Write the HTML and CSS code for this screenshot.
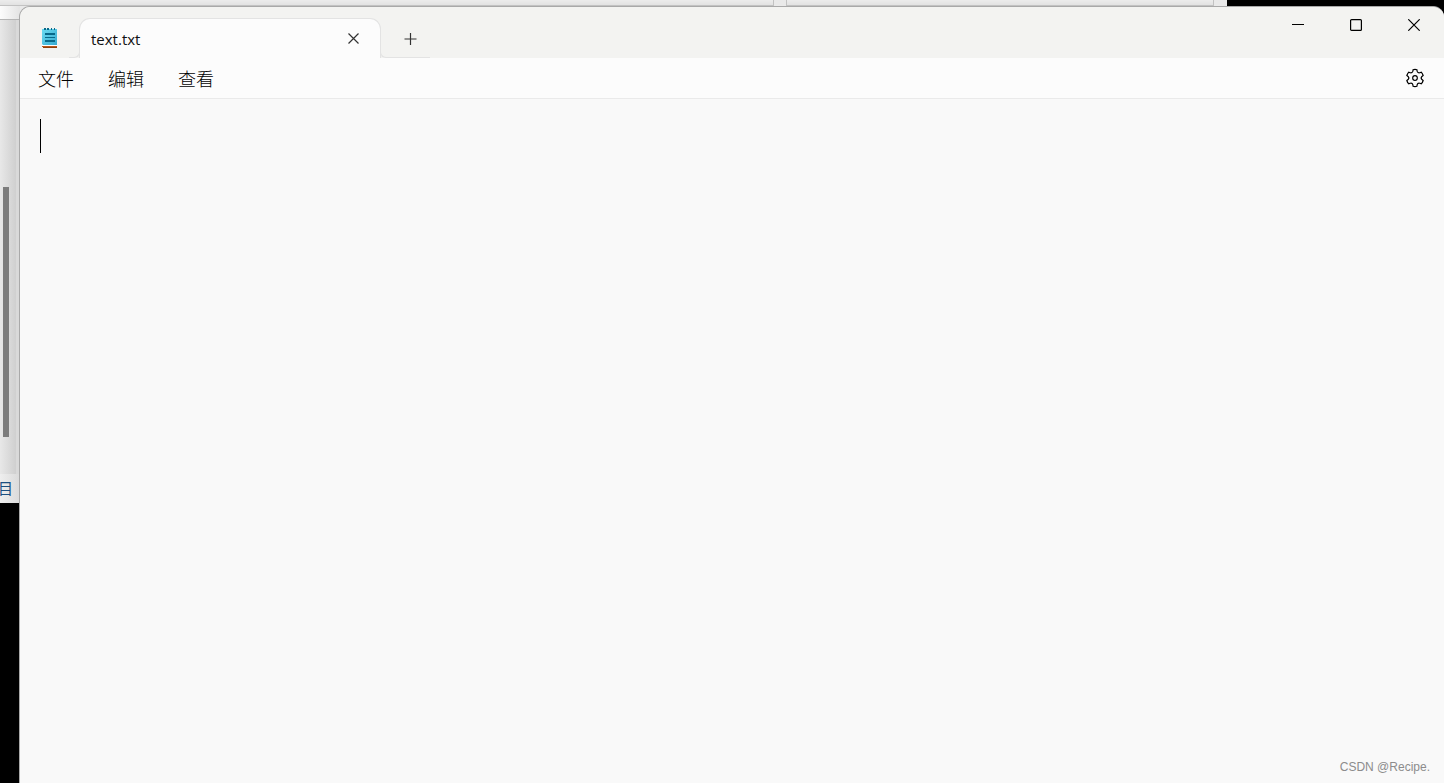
FILE: index.html
```html
<!DOCTYPE html>
<html lang="zh-CN">
<head>
<meta charset="utf-8">
<title>text.txt</title>
<link rel="stylesheet" href="styles.css">
</head>
<body>
<div class="desktop">
  <div class="back-window" aria-hidden="true">
    <div class="back-fields"><span class="field field-wide"></span><span class="field"></span></div>
    <div class="back-side">
      <div class="back-head"></div>
      <div class="back-list"><span class="back-thumb"></span></div>
      <div class="back-status">目</div>
    </div>
  </div>

  <main class="window">
    <header class="titlebar">
      <svg class="app-icon" viewBox="0 0 16 20" aria-hidden="true">
        <defs><linearGradient id="page" x1="0" y1="0" x2="1" y2="1"><stop offset="0" stop-color="#6bdcf2"/><stop offset="1" stop-color="#38a9cf"/></linearGradient></defs>
        <path fill="#fff" d="M0 16h15v2H0z"/>
        <path fill="#b9561a" d="M0 18h15v1H0z"/>
        <path fill="#8f3f0c" d="M1 19h14v1H1z"/>
        <path fill="url(#page)" d="M0 1h15v16H1l-1-1z"/>
        <path fill="#08698a" d="M2 0h2v2H2zM5 0h2v2H5zM9 0h1v2H9zM12 0h1v2h-1zM3 5h10v2H3zM3 9h10v1H3zM3 12h10v2H3z"/>
      </svg>
      <div class="tab">
        <span class="tab-name">text.txt</span>
        <button class="tab-close" aria-label="关闭标签页"><svg width="11" height="11" viewBox="0 0 11 11"><path d="M.5.5l10 10M10.500.5l-10 10"/></svg></button>
      </div>
      <button class="tab-add" aria-label="新建标签页"><svg width="13" height="13" viewBox="0 0 13 13"><path d="M6.500 0v12M.5 6h12"/></svg></button>
      <div class="controls">
        <button aria-label="最小化"><svg width="12" height="12" viewBox="0 0 12 12"><path d="M0 5.500h12"/></svg></button>
        <button aria-label="最大化"><svg width="12" height="12" viewBox="0 0 12 12"><rect x=".6" y=".6" width="10.800" height="10.800" rx="1"/></svg></button>
        <button aria-label="关闭"><svg width="12" height="12" viewBox="0 0 12 12"><path d="M.3.3l11.400 11.400M11.700.3L.3 11.700"/></svg></button>
      </div>
    </header>
    <nav class="menubar">
      <button>文件</button>
      <button>编辑</button>
      <button>查看</button>
      <button class="settings" aria-label="设置">
        <svg width="20" height="20" viewBox="-10 -10 20 20"><path d="M-1.900-8.300Q0-8.900 1.900-8.300L2.100-6.800Q2.700-4.680 4.840-5.220L6.240-5.800Q7.620-4.400 8.140-2.500L6.940-1.580Q5.400 0 6.940 1.580L8.140 2.500Q7.620 4.400 6.240 5.800L4.840 5.220Q2.700 4.680 2.100 6.800L1.900 8.300Q0 8.900-1.900 8.300L-2.100 6.800Q-2.700 4.680-4.840 5.220L-6.240 5.800Q-7.620 4.400-8.140 2.500L-6.940 1.580Q-5.400 0-6.940-1.580L-8.140-2.500Q-7.620-4.400-6.240-5.800L-4.840-5.220Q-2.700-4.680-2.100-6.800Z"/><circle r="2.300"/></svg>
      </button>
    </nav>
    <div class="editor">
      <textarea aria-label="文本编辑器" spellcheck="false"></textarea>
      <span class="caret"></span>
      <span class="watermark">CSDN @Recipe.</span>
    </div>
  </main>
</div>
</body>
</html>
```

FILE: styles.css
```css
* { box-sizing: border-box; }

body {
  margin: 0;
  background: #000;
  font-family: "Open Sans", "Noto Sans CJK SC", sans-serif;
  color: #111;
}

button {
  display: flex;
  align-items: center;
  justify-content: center;
  padding: 0;
  border: 0;
  background: none;
  color: inherit;
  font: inherit;
}

svg {
  display: block;
  fill: none;
  stroke: currentColor;
  stroke-width: 1.2;
}

.desktop {
  position: relative;
  height: 100vh;
  overflow: hidden;
}

/* Window partly hidden behind the editor */
.back-window {
  position: absolute;
  top: 0;
  left: 0;
  width: 85%;
  height: 503px;
  background: #e9e9e9;
}

.back-fields {
  display: flex;
  gap: 12px;
  height: 6px;
  padding-right: 13px;
}

.field {
  width: 428px;
  border: solid #c2c2c2;
  border-width: 0 1px 1px;
  background: linear-gradient(#ececec, #e2e2e2);
}

.field-wide { flex: 1; border-left: 0; }

.back-side {
  display: flex;
  flex-direction: column;
  width: 20px;
  height: 497px;
}

.back-head {
  height: 14px;
  border-bottom: 1px solid #b5b5b5;
  background: linear-gradient(90deg, #fcfcfc, #e4e4e4);
}

.back-list {
  flex: 1;
  padding: 167px 0 0 3px;
  border-right: 4px solid #d9d9d9;
  background: linear-gradient(90deg, #e8e8e8, #cfcfcf);
}

.back-thumb {
  display: block;
  width: 6px;
  height: 250px;
  background: #7c7c7c;
}

.back-status {
  height: 29px;
  background: linear-gradient(90deg, #eee, #dadada);
  color: #1b4f80;
  font-size: 15px;
  line-height: 28px;
  text-indent: -2px;
}

/* Editor window */
.window {
  position: absolute;
  inset: 6px 0 0 19px;
  display: flex;
  flex-direction: column;
  border: solid #a9a9a9;
  border-width: 1px 0 0 1px;
  border-radius: 11px 11px 0 0;
  background: #f9f9f9;
  overflow: hidden;
}

.titlebar {
  display: flex;
  height: 51px;
  background: #f3f3f1;
}

.app-icon {
  width: 16px;
  height: 20px;
  margin: 21px 21px 0 22px;
  stroke: none;
}

.tab {
  position: relative;
  display: flex;
  align-items: center;
  justify-content: space-between;
  width: 302px;
  height: 40px;
  margin-top: 11px;
  padding: 0 16px 0 11px;
  border: solid #e3e3e3;
  border-width: 1px 1px 0;
  border-radius: 11px 11px 0 0;
  background: #fcfcfc;
}

/* Curved feet where the tab meets the menu bar */
.tab::before,
.tab::after {
  content: "";
  position: absolute;
  bottom: 0;
  height: 6px;
  border-bottom: 1px solid #e3e3e3;
  background: #f3f3f1;
}

.tab::before {
  right: 100%;
  width: 10px;
  border-right: 1px solid #e3e3e3;
  border-bottom-right-radius: 6px;
}

.tab::after {
  left: 100%;
  width: 49px;
  border-left: 1px solid #e3e3e3;
  border-bottom-left-radius: 6px;
}

.tab-name {
  font-size: 15px;
  line-height: 20px;
}

.tab-close,
.tab-add {
  width: 22px;
  height: 22px;
  color: #333;
}

.tab-add { margin: 21px 0 0 18px; }

.controls {
  display: flex;
  height: 36px;
  margin-left: auto;
  padding-right: 1px;
  color: #000;
}

.controls button { width: 58px; }

.menubar {
  display: flex;
  gap: 34px;
  height: 41px;
  padding: 0 19px 0 18px;
  border-bottom: 1px solid #eaeaea;
  background: #fcfcfc;
  color: #000;
  font-family: "Noto Sans CJK SC", sans-serif;
  font-size: 18px;
  font-weight: 300;
}

.settings { margin-left: auto; }

.editor {
  position: relative;
  display: flex;
  flex: 1;
}

textarea {
  flex: 1;
  padding: 20px;
  border: 0;
  outline: 0;
  background: transparent;
  font: 24px/34px "Noto Sans CJK SC", sans-serif;
  resize: none;
}

.caret {
  position: absolute;
  top: 20px;
  left: 20px;
  width: 1px;
  height: 34px;
  background: #000;
}

.watermark {
  position: absolute;
  right: 14px;
  bottom: 8px;
  color: #8c8c8c;
  font: 12px/16px "Liberation Sans", sans-serif;
}
```
